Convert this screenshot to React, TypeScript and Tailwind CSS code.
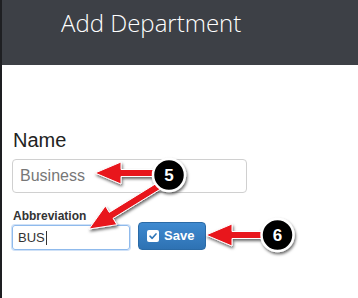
import React from "react";

type P = [number, number];

function arrowPoints(from: P, tip: P, shaft = 7, headLen = 26, headW = 22): string {
  const dx = tip[0] - from[0];
  const dy = tip[1] - from[1];
  const len = Math.hypot(dx, dy);
  const ux = dx / len;
  const uy = dy / len;
  const nx = -uy;
  const ny = ux;
  const bx = tip[0] - ux * headLen;
  const by = tip[1] - uy * headLen;
  const pts: P[] = [
    [from[0] + nx * shaft / 2, from[1] + ny * shaft / 2],
    [bx + nx * shaft / 2, by + ny * shaft / 2],
    [bx + nx * headW / 2, by + ny * headW / 2],
    tip,
    [bx - nx * headW / 2, by - ny * headW / 2],
    [bx - nx * shaft / 2, by - ny * shaft / 2],
    [from[0] - nx * shaft / 2, from[1] - ny * shaft / 2],
  ];
  return pts.map((p) => `${p[0].toFixed(1)},${p[1].toFixed(1)}`).join(" ");
}

function Annotations() {
  return (
    <svg className="absolute left-0 top-0 pointer-events-none" width="358" height="298" viewBox="0 0 358 298">
      <defs>
        <filter id="sh" x="-20%" y="-20%" width="140%" height="160%">
          <feDropShadow dx="1" dy="2" stdDeviation="1.6" floodColor="#000" floodOpacity="0.6" />
        </filter>
      </defs>
      <g filter="url(#sh)">
        <polygon points={arrowPoints([158, 173], [93, 173])} fill="#e8121b" stroke="#fff" strokeWidth="1" strokeLinejoin="round" />
        <polygon points={arrowPoints([160, 184], [87, 229])} fill="#e8121b" stroke="#fff" strokeWidth="1" strokeLinejoin="round" />
        <polygon points={arrowPoints([265, 235], [204, 235])} fill="#e8121b" stroke="#fff" strokeWidth="1" strokeLinejoin="round" />
        <circle cx="167" cy="175" r="16" fill="#000" stroke="#fff" strokeWidth="2.5" />
        <circle cx="275.5" cy="235" r="16" fill="#000" stroke="#fff" strokeWidth="2.5" />
      </g>
      <text x="167" y="181" textAnchor="middle" fill="#fff" fontFamily="'Liberation Sans', Arial, sans-serif" fontWeight="700" fontSize="17">5</text>
      <text x="275.5" y="241" textAnchor="middle" fill="#fff" fontFamily="'Liberation Sans', Arial, sans-serif" fontWeight="700" fontSize="17">6</text>
    </svg>
  );
}

function CheckSquare() {
  return (
    <svg width="12" height="12" viewBox="0 0 12 12">
      <rect x="0" y="0" width="12" height="12" rx="2" fill="#fff" />
      <path d="M3 6.2 L5.2 8.3 L9 3.9" fill="none" stroke="#2f76b8" strokeWidth="1.6" strokeLinecap="round" strokeLinejoin="round" />
    </svg>
  );
}

export default function App() {
  return (
    <div className="relative w-[358px] h-[298px] overflow-hidden bg-white border-l-2 border-[#1e1f22]">
      <div className="h-[65px] bg-[#3d4046] pl-[59px] pt-[11px]">
        <div className="text-[24px] leading-[24px] font-light text-white" style={{ fontFamily: "'Open Sans', sans-serif" }}>
          Add Department
        </div>
      </div>
      <div className="pl-[10px] pt-[65px]" style={{ fontFamily: "'Liberation Sans', Arial, sans-serif" }}>
        <div className="text-[20px] leading-[20px] text-[#222] pl-[1px]">Name</div>
        <div className="mt-[9px] w-[235px] h-[34px] rounded-[4px] border border-[#d0d0d0] flex items-center pl-[7px] text-[16px] text-[#777]">
          Business
        </div>
        <div className="mt-[17px] text-[12px] leading-[12px] font-bold text-[#333] pl-[1px]">Abbreviation</div>
        <div className="flex items-end gap-[8px]">
          <div className="w-[118px] h-[25px] rounded-[3px] border border-[#8fbaec] shadow-[0_0_0_1px_#cfe1f7] flex items-center pl-[5px] text-[13px] text-[#333]">
            BUS<span className="inline-block w-[1px] h-[14px] bg-[#333] ml-[1px]" />
          </div>
          <div className="w-[68px] h-[28px] rounded-[4px] border border-[#2a6aa6] bg-gradient-to-b from-[#3f8ad0] to-[#2e72b3] flex items-center pl-[8px] gap-[5px] text-white text-[13px] font-bold">
            <CheckSquare />
            <span>Save</span>
          </div>
        </div>
      </div>
      <Annotations />
    </div>
  );
}
